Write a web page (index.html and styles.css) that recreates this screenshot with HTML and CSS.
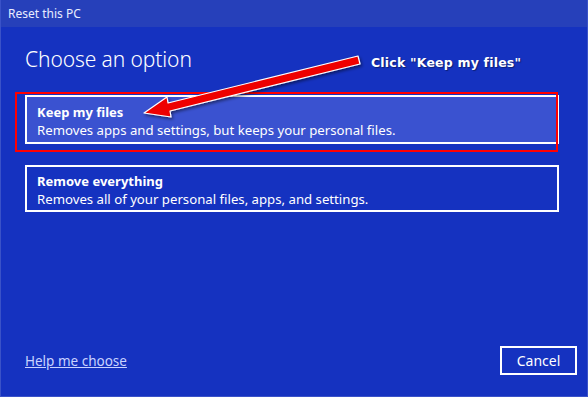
FILE: index.html
```html
<!DOCTYPE html>
<html lang="en">
  <head>
    <meta charset="UTF-8">
    <title>Reset this PC</title>
    <link rel="stylesheet" href="styles.css">
  </head>
  <body>
    <div class="window">
      <div class="titlebar">Reset this PC</div>
      <div class="content">
        <h1>Choose an option</h1>
        <div class="options">
          <div class="option selected">
            <div class="option-title">Keep my files</div>
            <div class="option-desc">Removes apps and settings, but keeps your personal files.</div>
          </div>
          <div class="option">
            <div class="option-title">Remove everything</div>
            <div class="option-desc">Removes all of your personal files, apps, and settings.</div>
          </div>
        </div>
        <div class="footer">
          <a href="#" class="help-link">Help me choose</a>
          <button class="cancel-btn">Cancel</button>
        </div>
      </div>

      <!-- anotações por cima da janela -->
      <div class="highlight"></div>
      <div class="callout">Click "Keep my files"</div>
      <svg class="arrow" width="588" height="397" viewBox="0 0 588 397">
        <defs>
          <filter id="shadow" x="-10%" y="-20%" width="130%" height="160%">
            <feDropShadow dx="1.5" dy="2" stdDeviation="1.5" flood-color="#000" flood-opacity="0.45"/>
          </filter>
        </defs>
        <polygon filter="url(#shadow)" fill="#ee0000" stroke="#ffffff" stroke-width="1.2" stroke-linejoin="round"
          points="143,113 170,117 169,111 359,64 357,56 167,103 166,97"/>
      </svg>
    </div>
  </body>
</html>
```

FILE: styles.css
```css
/* Janela "Reset this PC" */
body {
    margin: 0;
    font-family: 'Noto Sans', 'Open Sans', Arial, sans-serif;
    color: #ffffff;
}

.window {
    position: relative;
    width: 588px;
    height: 397px;
    box-sizing: border-box;
    border: 1px solid #3a52c8;
    border-top: none;
    background-color: #1532c0;
    display: flex;
    flex-direction: column;
    overflow: hidden;
}

.titlebar {
    height: 27px;
    line-height: 27px;
    padding-left: 7px;
    font-size: 12px;
    background-color: #2640ba;
    color: #e8ecff;
}

.content {
    flex: 1;
    display: flex;
    flex-direction: column;
    padding: 0 10px 21px 24px;
}

h1 {
    margin: 17px 0 0;
    font-size: 21px;
    line-height: 30px;
    font-weight: 300;
    letter-spacing: -0.1px;
}

.options {
    display: flex;
    flex-direction: column;
    gap: 21px;
    margin: 21px 18px 0 0;
}

.option {
    border: 2px solid #ffffff;
    padding: 6px 10px 2px;
    line-height: 17px;
}

.option.selected {
    background-color: #3a52d0;
    padding: 7px 10px 3px;
}

.option-title {
    font-size: 13px;
    font-weight: 700;
}

.option-desc {
    font-size: 13.2px;
    margin-top: 1px;
}

.footer {
    margin-top: auto;
    display: flex;
    justify-content: space-between;
    align-items: center;
}

.help-link {
    color: #c9d2ff;
    font-size: 13.5px;
    text-decoration: underline;
}

.cancel-btn {
    width: 77px;
    height: 29px;
    background: transparent;
    border: 2px solid #ffffff;
    color: #ffffff;
    font-family: inherit;
    font-size: 14px;
    padding: 0;
}

/* Anotações */
.highlight {
    position: absolute;
    left: 14px;
    top: 92px;
    width: 539px;
    height: 56px;
    border: 2px solid #ff0000;
}

.callout {
    position: absolute;
    left: 370px;
    top: 55px;
    font-family: 'DejaVu Sans', sans-serif;
    font-size: 12.5px;
    font-weight: 700;
    letter-spacing: 0.2px;
    color: #ffffff;
    text-shadow: 1px 1px 1px rgba(0, 0, 0, 0.4);
}

.arrow {
    position: absolute;
    left: 0;
    top: 0;
    pointer-events: none;
}
```
